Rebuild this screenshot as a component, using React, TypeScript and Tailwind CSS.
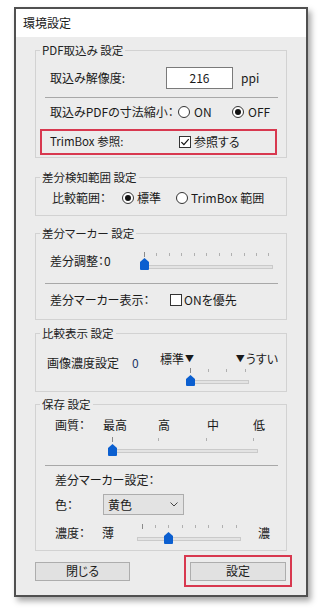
import * as React from "react";

const font = "font-['Noto_Sans_CJK_JP','Noto_Sans',sans-serif] [font-feature-settings:'palt']";

function Radio({ checked }: { checked?: boolean }) {
  return (
    <span className="flex h-[12px] w-[12px] shrink-0 items-center justify-center rounded-full border border-[#333] bg-white">
      {checked && <span className="h-[6px] w-[6px] rounded-full bg-[#111]" />}
    </span>
  );
}

function Check({ checked }: { checked?: boolean }) {
  return (
    <span className="flex h-[12px] w-[12px] shrink-0 items-center justify-center border border-[#333] bg-white">
      {checked && (
        <svg width="10" height="10" viewBox="0 0 10 10">
          <path d="M1.4 5.1 L3.9 7.6 L8.7 2.2" fill="none" stroke="#111" strokeWidth="1.2" />
        </svg>
      )}
    </span>
  );
}

type SliderProps = {
  w: number;
  h: number;
  ticks: number[];
  tickY: [number, number];
  track: [number, number, number];
  thumb: [number, number, number];
};

function Slider({ w, h, ticks, tickY, track, thumb }: SliderProps) {
  const [tx, ty, th] = thumb;
  return (
    <svg width={w} height={h} className="block shrink-0">
      {ticks.map((x, i) => (
        <line
          key={i}
          x1={x + 0.5}
          x2={x + 0.5}
          y1={i === 0 ? tickY[0] - 1 : tickY[0]}
          y2={i === 0 ? tickY[1] + 1 : tickY[1]}
          stroke={i === 0 ? "#8a8a8a" : "#b0b0b0"}
          strokeWidth="1"
        />
      ))}
      <rect x={track[0] + 0.5} y={track[2] + 0.5} width={track[1] - track[0]} height="3" fill="#e3e3e3" stroke="#cacaca" />
      <path
        d={`M${tx} ${ty + 4} L${tx + 4.5} ${ty} L${tx + 9} ${ty + 4} V${ty + th - 1} Q${tx + 9} ${ty + th} ${tx + 8} ${ty + th} H${tx + 1} Q${tx} ${ty + th} ${tx} ${ty + th - 1} Z`}
        fill="#0b5fd0"
      />
    </svg>
  );
}

function Group({ title, className, children }: { title: string; className?: string; children: React.ReactNode }) {
  return (
    <fieldset className={`ml-[19px] w-[252px] border border-[#d2d2d2] ${className ?? ""}`}>
      <legend className="ml-[4px] px-[2px] text-[11.5px] leading-[14px] text-[#222]">{title}</legend>
      {children}
    </fieldset>
  );
}

function Sep() {
  return <div className="ml-[9px] h-px w-[233px] bg-[#a8a8a8]" />;
}

export default function App() {
  return (
    <div className={`min-h-[610px] bg-white pl-[14px] pt-[7px] text-[12px] text-[#1a1a1a] ${font}`}>
      <div className="flex h-[590px] w-[294px] flex-col border-2 border-[#505050] bg-[#ececec] shadow-[3px_4px_6px_rgba(0,0,0,0.35)]">
        <div className="flex h-[28px] items-center bg-white pl-[7px] text-[12px]">環境設定</div>

        <Group title="PDF取込み 設定" className="mt-[6px] pb-[2px]">
          <div className="mt-[10px] flex h-[22px] items-center pl-[14px]">
            <span className="w-[116px]">取込み解像度:</span>
            <span className="flex h-[22px] w-[67px] items-center justify-center border border-[#7a7a7a] bg-white">216</span>
            <span className="ml-[8px]">ppi</span>
          </div>
          <div className="mt-[8px]">
            <Sep />
          </div>
          <div className="mt-[4px] flex h-[20px] items-center pl-[14px]">
            <span className="w-[128px]">取込みPDFの寸法縮小：</span>
            <span className="flex w-[54px] items-center gap-[4px]">
              <Radio />
              <span>ON</span>
            </span>
            <span className="flex items-center gap-[4px]">
              <Radio checked />
              <span>OFF</span>
            </span>
          </div>
          <div className="ml-[4px] mt-[7px] flex h-[26px] w-[237px] items-center border-2 border-[#d8384f] pl-[8px]">
            <span className="w-[129px] text-[11.5px]">TrimBox 参照:</span>
            <span className="flex items-center gap-[3px]">
              <Check checked />
              <span>参照する</span>
            </span>
          </div>
        </Group>

        <Group title="差分検知範囲 設定" className="mt-[12px] pb-[7px]">
          <div className="mt-[4px] flex h-[20px] items-center pl-[16px]">
            <span className="w-[70px]">比較範囲：</span>
            <span className="flex w-[54px] items-center gap-[3px]">
              <Radio checked />
              <span>標準</span>
            </span>
            <span className="flex items-center gap-[3px]">
              <Radio />
              <span>TrimBox 範囲</span>
            </span>
          </div>
        </Group>

        <Group title="差分マーカー 設定" className="mt-[10px] pb-[9px]">
          <div className="mt-[10px] flex h-[22px] items-center pl-[14px]">
            <span className="w-[88px]">差分調整：0</span>
            <Slider
              w={138}
              h={22}
              ticks={[6, 18, 31, 43, 56, 68, 81, 93, 106, 118, 130]}
              tickY={[3, 6]}
              track={[6, 134, 15]}
              thumb={[2, 8, 12]}
            />
          </div>
          <div className="mt-[11px]">
            <Sep />
          </div>
          <div className="mt-[6px] flex h-[20px] items-center pl-[14px]">
            <span className="w-[120px]">差分マーカー表示：</span>
            <span className="flex items-center gap-[2px]">
              <Check />
              <span>ONを優先</span>
            </span>
          </div>
        </Group>

        <Group title="比較表示 設定" className="mt-[6px] pb-[3px]">
          <div className="mt-[10px] flex h-[38px] items-start pl-[11px]">
            <span className="mt-[6px] w-[85px] leading-[14px]">画像濃度設定</span>
            <span className="mt-[6px] w-[28px] leading-[14px] text-[#1d3566]">0</span>
            <div className="flex flex-col">
              <div className="mt-[2px] flex w-[118px] items-center justify-between leading-[14px]">
                <span className="flex items-center">
                  標準<span className="ml-[1px] text-[9px]">▼</span>
                </span>
                <span className="flex items-center">
                  <span className="mr-[1px] text-[9px]">▼</span>うすい
                </span>
              </div>
              <div className="ml-[24px]">
                <Slider w={68} h={22} ticks={[6, 24, 42, 61]} tickY={[3, 6]} track={[6, 64, 14]} thumb={[2, 9, 11]} />
              </div>
            </div>
          </div>
        </Group>

        <Group title="保存 設定" className="mt-[5px] pb-[5px]">
          <div className="mt-[6px] flex h-[16px] items-center pl-[19px] leading-[16px]">
            <span className="w-[48px]">画質：</span>
            <span className="w-[55px]">最高</span>
            <span className="w-[49px]">高</span>
            <span className="w-[46px]">中</span>
            <span>低</span>
          </div>
          <div className="ml-[70px] mt-[2px]">
            <Slider w={156} h={23} ticks={[6, 52, 100, 147]} tickY={[3, 6]} track={[6, 151, 14]} thumb={[2, 9, 12]} />
          </div>
          <div className="mt-[7px]">
            <Sep />
          </div>
          <div className="mt-[6px] flex h-[16px] items-center pl-[19px]">差分マーカー設定：</div>
          <div className="mt-[6px] flex h-[21px] items-center pl-[19px]">
            <span className="w-[48px]">色：</span>
            <span className="flex h-[21px] w-[81px] items-center justify-between border border-[#adadad] bg-[#e3e3e3] pl-[4px] pr-[5px]">
              <span>黄色</span>
              <svg width="8" height="5" viewBox="0 0 8 5">
                <path d="M0.5 0.5 L4 4 L7.5 0.5" fill="none" stroke="#444" strokeWidth="1" />
              </svg>
            </span>
          </div>
          <div className="mt-[6px] flex h-[24px] items-center pl-[19px]">
            <span className="w-[47px]">濃度：</span>
            <span className="w-[33px]">薄</span>
            <Slider
              w={110}
              h={24}
              ticks={[7, 20, 33, 47, 60, 73, 87, 101]}
              tickY={[4, 7]}
              track={[2, 105, 16]}
              thumb={[29, 11, 12]}
            />
            <span className="ml-[13px]">濃</span>
          </div>
        </Group>

        <div className="mt-[4px] flex items-center">
          <button className="ml-[19px] flex h-[19px] w-[95px] items-center justify-center border border-[#adadad] bg-[#e1e1e1] text-[12px] leading-none">
            閉じる
          </button>
          <div className="ml-[54px] flex h-[32px] w-[108px] items-center justify-center border-2 border-[#d8384f]">
            <button className="flex h-[19px] w-[96px] items-center justify-center border border-[#adadad] bg-[#e1e1e1] text-[12px] leading-none">
              設定
            </button>
          </div>
        </div>
      </div>
    </div>
  );
}
